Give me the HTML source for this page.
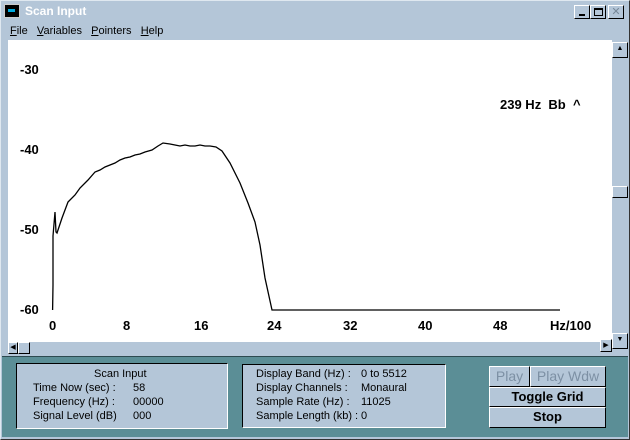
<!DOCTYPE html>
<html><head><style>
*{margin:0;padding:0;box-sizing:border-box}
body{width:630px;height:440px;overflow:hidden;background:#b4c6d8;font-family:"Liberation Sans",sans-serif;position:relative}
.a{position:absolute}
.t{font-size:11px;color:#000;white-space:nowrap}
.btn{position:absolute;background:#b4c6d8;border-top:1px solid #fff;border-left:1px solid #fff;border-right:1px solid #000;border-bottom:1px solid #000;font-weight:bold;font-size:13px;text-align:center;line-height:18px}
.wb{position:absolute;width:16px;height:14px;background:#b4c6d8;border-top:1px solid #fff;border-left:1px solid #fff;border-right:1px solid #000;border-bottom:1px solid #000}
.lab{font-size:13px;font-weight:bold}
</style></head><body>
<div class="a" style="left:0;top:0;width:630px;height:440px;border:1px solid #dfe8f0;border-right-color:#333;border-bottom-color:#333"></div>
<div class="a" style="left:4px;top:4px;width:16px;height:14px;background:#000;border:1px solid #ccc"><div class="a" style="left:3px;top:4px;width:7px;height:3px;background:#0ad"></div></div>
<div class="a" style="left:25px;top:4px;font-size:12px;font-weight:bold;color:#fff">Scan Input</div>
<div class="wb" style="left:574px;top:5px"><div class="a" style="left:4px;top:8px;width:6px;height:2px;background:#000"></div></div>
<div class="wb" style="left:590px;top:5px"><div class="a" style="left:3px;top:2px;width:9px;height:8px;border:1px solid #000;border-top-width:2px"></div></div>
<div class="wb" style="left:608px;top:5px;color:#789;font-size:11px;text-align:center;line-height:12px">✕</div>
<div class="a t" style="left:10px;top:25px;font-size:11px"><u>F</u>ile&nbsp;&nbsp;&nbsp;<u>V</u>ariables&nbsp;&nbsp;&nbsp;<u>P</u>ointers&nbsp;&nbsp;&nbsp;<u>H</u>elp</div>
<div class="a" style="left:8px;top:40px;width:604px;height:302px;background:#fff"></div>
<svg class="a" style="left:0;top:0" width="630" height="440">
<polyline fill="none" stroke="#000" stroke-width="1.3" points="52.6,310 53,285 53,236 55,212 56,232 57,233 62,218 68,202 75,195 80,188 88,180 95,172 100,170 105,167 110,165 115,163 120,160 125,158 130,157 135,155 140,154 145,152 152,150 158,146 163,143 170,144 175,145 180,146 185,145 190,146 195,146 200,145 205,146 210,146 216,147 222,151 230,163 240,183 248,203 255,222 260,245 265,278 272,310 560,310"/>
</svg>
<div class="a lab" style="left:20px;top:62px">-30</div>
<div class="a lab" style="left:20px;top:142px">-40</div>
<div class="a lab" style="left:20px;top:222px">-50</div>
<div class="a lab" style="left:20px;top:302px">-60</div>
<div class="a lab" style="left:49px;top:318px">0</div>
<div class="a lab" style="left:123px;top:318px">8</div>
<div class="a lab" style="left:194px;top:318px">16</div>
<div class="a lab" style="left:267px;top:318px">24</div>
<div class="a lab" style="left:343px;top:318px">32</div>
<div class="a lab" style="left:418px;top:318px">40</div>
<div class="a lab" style="left:493px;top:318px">48</div>
<div class="a lab" style="left:550px;top:318px">Hz/100</div>
<div class="a lab" style="left:500px;top:97px">239 Hz&nbsp;&nbsp;Bb&nbsp;&nbsp;^</div>
<div class="wb" style="left:612px;top:42px;height:16px;font-size:7px;text-align:center;line-height:12px">▲</div>
<div class="wb" style="left:612px;top:186px;height:12px"></div>
<div class="wb" style="left:612px;top:333px;height:16px;font-size:7px;text-align:center;line-height:12px">▼</div>
<div class="wb" style="left:8px;top:342px;width:10px;height:12px;font-size:7px;text-align:center;line-height:10px">◀</div>
<div class="wb" style="left:18px;top:342px;width:12px;height:12px"></div>
<div class="wb" style="left:600px;top:339px;width:12px;height:13px;font-size:7px;text-align:center;line-height:11px">▶</div>
<div class="a" style="left:2px;top:356px;width:626px;height:81px;background:#5b8e96;border-top:1px solid #2d4a50"></div>
<div class="a" style="left:16px;top:363px;width:212px;height:66px;background:#b4c6d8;border:1px solid #000;border-right-color:#fff;border-bottom-color:#fff"></div>
<div class="a t" style="left:94px;top:368px">Scan Input</div>
<div class="a t" style="left:33px;top:382px">Time Now (sec) :</div><div class="a t" style="left:133px;top:382px">58</div>
<div class="a t" style="left:33px;top:396px">Frequency (Hz) :</div><div class="a t" style="left:133px;top:396px">00000</div>
<div class="a t" style="left:33px;top:410px">Signal Level (dB)</div><div class="a t" style="left:133px;top:410px">000</div>
<div class="a" style="left:242px;top:364px;width:204px;height:64px;background:#b4c6d8;border:1px solid #000;border-right-color:#fff;border-bottom-color:#fff"></div>
<div class="a t" style="left:256px;top:368px">Display Band (Hz) :</div><div class="a t" style="left:361px;top:368px">0 to 5512</div>
<div class="a t" style="left:256px;top:382px">Display Channels :</div><div class="a t" style="left:361px;top:382px">Monaural</div>
<div class="a t" style="left:256px;top:396px">Sample Rate (Hz) :</div><div class="a t" style="left:361px;top:396px">11025</div>
<div class="a t" style="left:256px;top:410px">Sample Length (kb) :</div><div class="a t" style="left:361px;top:410px">0</div>
<div class="btn" style="left:489px;top:366px;width:41px;height:21px;color:#7d90a4;font-weight:normal;font-size:14px">Play</div>
<div class="btn" style="left:530px;top:366px;width:76px;height:21px;color:#7d90a4;font-weight:normal;font-size:14px">Play Wdw</div>
<div class="btn" style="left:489px;top:387px;width:117px;height:20px">Toggle Grid</div>
<div class="btn" style="left:489px;top:407px;width:117px;height:21px">Stop</div>
</body></html>
